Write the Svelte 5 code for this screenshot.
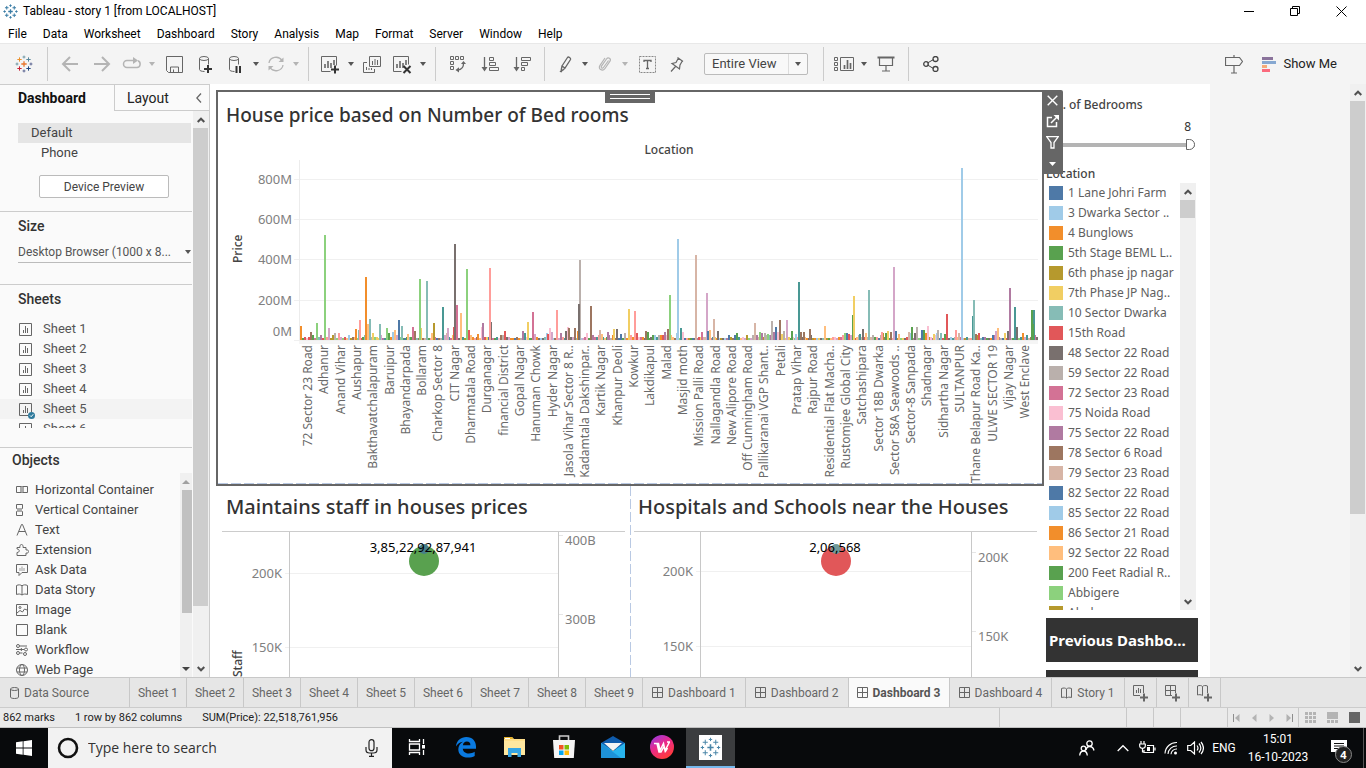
<script>
  const C = {
    blue: '#4e79a7', lblue: '#a0cbe8', orange: '#f28e2b', lorange: '#ffbe7d', green: '#59a14f', lgreen: '#8cd17d',
    olive: '#b6992d', yellow: '#f1ce63', teal: '#499894', lteal: '#86bcb6', red: '#e15759', salmon: '#ff9d9a',
    dgrey: '#79706e', taupe: '#bab0ac', magenta: '#d37295', pink: '#fabfd2', purple: '#b07aa1', lpurple: '#d4a6c8',
    brown: '#9d7660', tan: '#d7b5a6'
  };
  const palette = Object.values(C);

  const menus = ['File', 'Data', 'Worksheet', 'Dashboard', 'Story', 'Analysis', 'Map', 'Format', 'Server', 'Window', 'Help'];

  const tools = [
    { i: 'back', n: 'Undo', w: 'wide' }, { i: 'forward', n: 'Redo', w: 'wide' }, { i: 'replay', n: 'Replay', w: 'narrow', caret: 'dim' },
    { i: 'save', n: 'Save', w: 'wide' }, { i: 'dbAdd', n: 'New data source' }, { i: 'dbPause', n: 'Pause updates', caret: 'on' },
    { i: 'refresh', n: 'Run update', w: 'narrow', caret: 'dim' }, { sep: true },
    { i: 'sheetAdd', n: 'New worksheet', caret: 'on' }, { i: 'duplicate', n: 'Duplicate' }, { i: 'sheetClear', n: 'Clear sheet', caret: 'on' }, { sep: true },
    { i: 'swap', n: 'Swap rows and columns', w: 'wide' }, { i: 'sortAsc', n: 'Sort ascending', w: 'wide' }, { i: 'sortDesc', n: 'Sort descending', w: 'wide' }, { sep: true },
    { i: 'pen', n: 'Highlight', w: 'narrow', caret: 'on' }, { i: 'clip', n: 'Group members', w: 'narrow', caret: 'dim' },
    { i: 'label', n: 'Show mark labels', w: 'wide' }, { i: 'pin', n: 'Fix axes', w: 'narrow' }, { fit: true }, { sep: true },
    { i: 'cards', n: 'Show cards', w: 'narrow', caret: 'on' }, { i: 'present', n: 'Presentation mode', w: 'wide' }, { sep: true },
    { i: 'share', n: 'Share', w: 'wide' }
  ];

  const sheets = ['Sheet 1', 'Sheet 2', 'Sheet 3', 'Sheet 4', 'Sheet 5', 'Sheet 6'];
  const objects = [
    ['hcont', 'Horizontal Container'], ['vcont', 'Vertical Container'], ['text', 'Text'], ['ext', 'Extension'], ['ask', 'Ask Data'],
    ['book', 'Data Story'], ['image', 'Image'], ['blank', 'Blank'], ['flow', 'Workflow'], ['web', 'Web Page']
  ];

  const legend = [
    ['1 Lane Johri Farm', C.blue], ['3 Dwarka Sector ..', C.lblue], ['4 Bunglows', C.orange], ['5th Stage BEML L..', C.green],
    ['6th phase jp nagar', C.olive], ['7th Phase JP Nag..', C.yellow], ['10 Sector Dwarka', C.lteal], ['15th Road', C.red],
    ['48 Sector 22 Road', C.dgrey], ['59 Sector 22 Road', C.taupe], ['72 Sector 23 Road', C.magenta], ['75 Noida Road', C.pink],
    ['75 Sector 22 Road', C.purple], ['78 Sector 6 Road', C.brown], ['79 Sector 23 Road', C.tan], ['82 Sector 22 Road', C.blue],
    ['85 Sector 22 Road', C.lblue], ['86 Sector 21 Road', C.orange], ['92 Sector 22 Road', C.lorange], ['200 Feet Radial R..', C.green],
    ['Abbigere', C.lgreen], ['Abulpur', C.olive]
  ];

  const places = ['72 Sector 23 Road', 'Adhanur', 'Anand Vihar', 'Aushapur', 'Bakthavatchalapuram', 'Baruipur', 'Bhayandarpada', 'Bollaram',
    'Charkop Sector 8', 'CIT Nagar', 'Dharmatala Road', 'Durganagar', 'financial District', 'Gopal Nagar', 'Hanuman Chowk', 'Hyder Nagar',
    'Jasola Vihar Sector 8 R..', 'Kadamtala Dakshinpar..', 'Kartik Nagar', 'Khanpur Deoli', 'Kowkur', 'Lakdikapul', 'Malad', 'Masjid moth',
    'Mission Palli Road', 'Nallagandla Road', 'New Alipore Road', 'Off Cunningham Road', 'Pallikaranai VGP Shant..', 'Petali', 'Pratap Vihar',
    'Rajpur Road', 'Residential Flat Macha..', 'Rustomjee Global City', 'Satchashipara', 'Sector 18B Dwarka', 'Sector 58A Seawoods ..',
    'Sector-8 Sanpada', 'Shadnagar', 'Sidhartha Nagar', 'SULTANPUR', 'Thane Belapur Road Ka..', 'ULWE SECTOR 19', 'Vijay Nagar', 'West Enclave'];

  // Tall marks: x centre, top, colour
  const peaks = [
    [301, 326, 'orange'], [311, 332, 'brown'], [317, 323, 'lgreen'], [325, 235, 'lgreen'], [329, 328, 'lpurple'], [335, 333, 'taupe'],
    [356, 329, 'orange'], [359, 330, 'lteal'], [360, 320, 'salmon'], [368, 324, 'lorange'], [366, 277, 'orange'], [370, 319, 'lteal'],
    [380, 324, 'lteal'], [387, 328, 'lgreen'], [395, 330, 'lorange'], [393, 332, 'lblue'], [399, 320, 'blue'], [402, 326, 'lteal'], [408, 334, 'lorange'],
    [413, 327, 'magenta'], [415, 331, 'brown'], [421, 328, 'yellow'], [420, 279, 'lgreen'], [427, 281, 'lteal'], [432, 333, 'lorange'], [434, 323, 'olive'],
    [443, 307, 'teal'], [448, 328, 'lpurple'], [454, 327, 'red'], [457, 305, 'magenta'], [455, 244, 'dgrey'], [461, 313, 'lorange'],
    [467, 269, 'lgreen'], [469, 330, 'red'], [478, 334, 'orange'], [482, 327, 'pink'], [483, 323, 'purple'], [491, 322, 'dgrey'], [490, 268, 'salmon'],
    [505, 331, 'red'], [523, 331, 'purple'], [528, 322, 'yellow'], [535, 334, 'lpurple'], [533, 312, 'magenta'], [548, 334, 'red'], [550, 328, 'pink'],
    [552, 332, 'lpurple'], [557, 310, 'salmon'], [566, 331, 'dgrey'], [568, 327, 'pink'], [569, 328, 'brown'], [575, 328, 'brown'], [578, 331, 'orange'],
    [580, 260, 'taupe'], [579, 304, 'dgrey'], [591, 306, 'brown'], [600, 330, 'tan'], [602, 334, 'lorange'], [608, 332, 'purple'], [614, 329, 'yellow'],
    [617, 329, 'dgrey'], [621, 334, 'blue'], [629, 309, 'yellow'], [635, 311, 'salmon'], [646, 331, 'brown'], [648, 332, 'green'],
    [665, 332, 'purple'], [668, 329, 'brown'], [670, 295, 'lgreen'], [678, 239, 'lblue'], [681, 328, 'teal'], [683, 332, 'pink'], [696, 255, 'tan'],
    [702, 332, 'magenta'], [707, 293, 'lpurple'], [708, 331, 'blue'], [710, 330, 'lorange'], [714, 319, 'tan'], [718, 331, 'dgrey'], [755, 323, 'tan'],
    [760, 332, 'lgreen'], [762, 333, 'purple'], [765, 333, 'taupe'], [768, 334, 'lgreen'], [772, 321, 'taupe'], [774, 332, 'purple'], [776, 327, 'blue'],
    [778, 332, 'pink'], [780, 320, 'brown'], [782, 334, 'yellow'], [784, 331, 'taupe'], [787, 320, 'lpurple'], [792, 331, 'green'], [796, 334, 'lblue'],
    [799, 282, 'teal'], [801, 332, 'brown'], [804, 332, 'brown'], [810, 329, 'brown'], [825, 326, 'lorange'], [849, 334, 'red'], [853, 315, 'green'],
    [854, 296, 'yellow'], [860, 334, 'teal'], [863, 329, 'dgrey'], [866, 333, 'lorange'], [869, 290, 'lteal'], [882, 332, 'salmon'], [886, 333, 'green'],
    [888, 331, 'yellow'], [891, 332, 'brown'], [894, 267, 'lpurple'], [896, 331, 'blue'], [899, 334, 'lorange'], [909, 332, 'tan'], [911, 333, 'lblue'],
    [912, 327, 'green'], [917, 327, 'taupe'], [922, 330, 'blue'], [924, 330, 'green'], [926, 333, 'orange'], [928, 326, 'pink'], [934, 334, 'yellow'],
    [938, 330, 'taupe'], [945, 334, 'green'], [947, 314, 'red'], [956, 330, 'salmon'], [962, 168, 'lblue'], [973, 316, 'teal'], [974, 300, 'lteal'],
    [976, 334, 'brown'], [996, 331, 'lpurple'], [998, 328, 'lorange'], [1005, 333, 'yellow'], [1008, 331, 'dgrey'], [1010, 288, 'purple'],
    [1015, 307, 'teal'], [1017, 327, 'dgrey'], [1023, 333, 'orange'], [1032, 310, 'green'], [1034, 310, 'teal'], [1033, 324, 'green']
  ];

  // Hundreds of low marks along the baseline
  let seed = 7;
  const rnd = () => ((seed = (seed * 16807) % 2147483647) / 2147483647);
  const low = Array.from({ length: 369 }, (_, k) => {
    const r = rnd();
    return { x: 300 + k * 2, h: r > 0.93 ? 7 : r > 0.78 ? 5 : r > 0.5 ? 3 : 2, c: palette[Math.floor(rnd() * 20)] };
  });

  const G = '#666';
  const svg = (w, h, body, extra = '') =>
    `<svg width="${w}" height="${h}" viewBox="0 0 ${w} ${h}" fill="none" stroke="${G}" aria-hidden="true" ${extra} style="display:block;flex:none">${body}</svg>`;
  const plus = (x, y, r, c, w = 1) => `<path d="M${x - r} ${y}h${2 * r}M${x} ${y - r}v${2 * r}" stroke="${c}" stroke-width="${w}"/>`;
  const logo = (s, cs) => {
    const m = s / 2, a = s * 0.36, b = s * 0.25;
    return svg(s, s, plus(m, m, s * 0.15, cs[0], s > 18 ? 1.6 : 1.3) + plus(m, m - a - 0.5, s * 0.08, cs[1]) + plus(m, m + a + 0.5, s * 0.08, cs[2]) +
      plus(m - a - 0.5, m, s * 0.08, cs[3]) + plus(m + a + 0.5, m, s * 0.08, cs[4]) + plus(m - b, m - b, s * 0.12, cs[5]) + plus(m + b, m - b, s * 0.12, cs[6]) +
      plus(m - b, m + b, s * 0.12, cs[7]) + plus(m + b, m + b, s * 0.12, cs[8]));
  };
  const blues = Array(9).fill('#3a7ca5');
  const frame = '<path d="M10.5 16.5h-9v-15h15v9"/>';
  const columns = '<path d="M5 13V9M8 13V6M11 13V8M14 10V5" stroke-width="1.6"/>';
  const cyl = '<path d="M3.500 3.500v11c0 1.200 2 2 5 2M12.500 3.500v6"/><ellipse cx="8" cy="3.500" rx="4.500" ry="2"/>';
  const grid4 = '<path d="M.5.5h10v10H.5zM5.500.5v10M.5 5.500h10"/>';
  const openBook = '<path d="M.5 1.500c2-.8 4-.6 5 .5 1-1.100 3-1.300 5-.5v9c-2-.6-4-.4-5 .6-1-1-3-1.200-5-.6zM5.500 2v9"/>';
  const add = '<path d="M8 13.500h8M12 9.500v8" stroke-width="2"/>';

  const icons = {
    app: logo(15, blues),
    mark: logo(18, ['#e8762c', '#7199a6', '#5b6591', '#7199a6', '#5c6692', '#eb912c', '#59879b', '#c72035', '#1f457e']),
    back: svg(18, 16, '<path d="M17 8H2M9 1 2 8l7 7" stroke="#b4b4b4" stroke-width="2"/>'),
    forward: svg(18, 16, '<path d="M1 8h15M9 1l7 7-7 7" stroke="#b4b4b4" stroke-width="2"/>'),
    replay: svg(20, 14, '<path d="M12 3.500H5a3.500 3.500 0 0 0 0 7h10a3.500 3.500 0 0 0 1-6.700" stroke="#b4b4b4" stroke-width="1.500"/><path d="M11 0v7l5-3.500z" fill="#b4b4b4" stroke="none"/>'),
    save: svg(17, 17, '<path d="M.5.5h16v16H2.500l-2-2zM4.500 16v-5h8v5M7.500 16v-2.500"/>', 'stroke-width="1"'),
    dbAdd: svg(18, 19, cyl + '<path d="M8 14h8M12 10v8" stroke="#333" stroke-width="2"/>'),
    dbPause: svg(18, 19, cyl + '<path d="M10.500 11v7M14 11v7" stroke="#333" stroke-width="2"/>'),
    refresh: svg(18, 16, '<path d="M2 7a7 6.500 0 0 1 13-2.500M16 9a7 6.500 0 0 1-13 2.500" stroke="#b4b4b4" stroke-width="1.300"/><path d="M16.500 1.500V6h-5zM1.500 14.500V10h5z" fill="#b4b4b4" stroke="none"/>'),
    sheetAdd: svg(20, 19, frame + columns + '<path d="M11 14.500h8M15 10.500v8" stroke="#333" stroke-width="2"/>'),
    duplicate: svg(18, 17, '<path d="M6.500.5h11v10h-11zM4 6.500H.5v10h11V13" /><path d="M9.500 9V5M12 9V3M14.500 9V4M3.500 14v-3M6 14v-2M8.500 14v-2"/>'),
    sheetClear: svg(20, 19, '<path d="M9.500 16.500h-8v-15h15v8"/>' + columns + '<path d="m11.500 11 7 7M18.500 11l-7 7" stroke="#333" stroke-width="2"/>'),
    swap: svg(18, 18, '<path d="M1.500 1.500h3v3h-3zM6.500 1.500h3v3h-3zM11.500 1.500h3v3h-3zM1.500 6.500h3v3h-3zM1.500 11.500h3v3h-3z"/><path d="M14.500 8c.2 4-1.800 6.500-6 7" stroke-width="1.300"/><path d="m12 9 2.500-3L17 9zM10 12.300v5.200L6.500 15z" fill="#666" stroke="none"/>'),
    sortAsc: svg(19, 17, '<path d="M3.500 1v12" stroke-width="1.300"/><path d="M.5 11h6l-3 4.500z" fill="#666" stroke="none"/><path d="M8.500 1.500h4v3h-4zM8.500 6.500h6v3h-6zM8.500 11.500h9v3h-9z"/>'),
    sortDesc: svg(19, 17, '<path d="M3.500 1v12" stroke-width="1.300"/><path d="M.5 11h6l-3 4.500z" fill="#666" stroke="none"/><path d="M8.500 1.500h9v3h-9zM8.500 6.500h6v3h-6zM8.500 11.500h3v3h-3z"/>'),
    pen: svg(13, 17, '<path d="M8.500 1.500 3 10l3 2 5.500-8.500c.5-1.500-2-3.300-3-2zM3 10l-.7 3.500 1.500.8L6 12" stroke-width="1.300"/><path d="m2.300 13.500-1.800 2.300 2 .7 1.500-2.200z" fill="#666" stroke="none"/>'),
    clip: svg(14, 16, '<path d="M10.500 4.500 5.500 11.500c-1 1.500-3 .2-2-1.300L8.500 3c1.700-2.400 5-.2 3.500 2.200L7 12.500c-2.500 3.500-7.500.5-5-3.200L7 2" stroke="#b4b4b4" stroke-width="1.200"/>'),
    label: svg(17, 17, '<path d="M.5.5h16v16H.5z" stroke="#888" stroke-dasharray="2 1"/><path d="M5 6V4.500h7V6M8.500 4.500v8M7 12.500h3" stroke-width="1.300"/>'),
    pin: svg(14, 16, '<path d="M7.500 1.500l5.500 4M8.300 2.200 6 6.500 2 7.500l7.500 5.500.5-4L12.300 5M5.500 10.500 1 15.500" stroke-width="1.200"/>'),
    cards: svg(20, 15, '<path d="M.5.5h3v3h-3zM.5 5.500h3v3h-3zM.5 10.500h3v3h-3zM6.500.5h13v13h-13z"/><path d="M10.500 12V8M13.500 12V3M16.500 12V6" stroke-width="1.700"/>'),
    present: svg(18, 16, '<path d="M.5 1.500h17" stroke-width="2"/><path d="M2.500 2v7.500h13V2M9 9.500v5M5 15h8" stroke-width="1.200"/>'),
    share: svg(16, 16, '<path d="m4.500 7 6-3.500M4.500 9l6 3.500" stroke="#444"/><g stroke="#444" stroke-width="1.300"><circle cx="3" cy="8" r="2.300"/><circle cx="12.500" cy="3" r="2.500"/><circle cx="12.500" cy="13" r="2.500"/></g>'),
    guide: svg(18, 19, '<path d="M9 0v2.500M9 10.500v7M6 18h6M.5 2.500h14l3 4-3 4H.5z" stroke-width="1.200"/>'),
    showme: svg(15, 15, '<g stroke="none"><path d="M0 0h11v3H0z" fill="#8a739b"/><path d="M0 4h14v3H0z" fill="#86a8d1"/><path d="M0 8h5v3H0z" fill="#f5ab7a"/><path d="M0 12h8v3H0z" fill="#fb6a7d"/></g>'),
    sheet: svg(13, 13, '<path d="M.5.5h12v12H.5z"/><path d="M4.500 10V7M6.500 10V3M8.500 10V5"/>'),
    sheetUsed: svg(17, 19, '<g transform="translate(0 3)"><path d="M9 12.500H.5V.5h12V9M4.500 10V7M6.500 10V3M8.500 10V5"/><circle cx="12.500" cy="12.500" r="3.500" fill="#2f7a9c" stroke="none"/><path d="m11 12.500 1.200 1.200 2-2.400" stroke="#fff"/></g>'),
    hcont: svg(12, 12, '<path d="M.5 2.500h5v6h-5zM6.500 2.500h5v6h-5z"/><path d="M4 3h4v5H4z" fill="#aaa" stroke="none"/>'),
    vcont: svg(12, 12, '<path d="M.5.5h6v4h-6zM.5 7.500h6v4h-6z"/><path d="M1 4h5v4H1z" fill="#aaa" stroke="none"/>'),
    text: svg(12, 12, '<path d="M1 11.500 5.500.5h1L11 11.500M3 7.500h6"/>'),
    ext: svg(13, 12, '<path d="M1 11.500v-3c3 0 3-3.500 0-3.500V3.500h3c-1-4 4-4 3 0h3V6c3.500-1 3.500 4 0 3v2.500z"/>'),
    ask: svg(12, 12, '<path d="M.5.500h11v8H6l-3 3v-3H.5z"/><path d="M4 7V4M6 7V2.500M8 7V4" stroke="#999"/>'),
    book: svg(12, 12, '<path d="M.5 1.500c2-1 4-.8 5.500.3C7.500.7 9.500.5 11.500 1.500v9c-2-.8-4-.6-5.500.5-1.500-1.100-3.500-1.300-5.500-.5zM6 2v9"/>'),
    image: svg(12, 12, '<path d="M.5.500h11v11H.5zM1 9l3-2.500L6.500 8l2-3 2.500 1"/><circle cx="4" cy="3.500" r="1"/>'),
    blank: svg(12, 12, '<path d="M.5.500h11v11H.5z"/>'),
    flow: svg(12, 12, '<circle cx="2" cy="2" r="1.500"/><circle cx="10" cy="5.500" r="1.500"/><circle cx="2" cy="9" r="1.500"/><circle cx="9" cy="10" r="1.500"/><path d="M3.500 2H11M0 5.500h8M4 9h2.500M5 4l1 1.500-1 1.500"/>'),
    web: svg(12, 12, '<circle cx="6" cy="6" r="5.500"/><ellipse cx="6" cy="6" rx="2.500" ry="5.500"/><path d="M1 4h10M1 8h10"/>'),
    data: svg(9, 12, '<path d="M.5 2v8c0 .8 1.500 1.500 4 1.500s4-.7 4-1.500V2"/><ellipse cx="4.500" cy="2" rx="4" ry="1.500"/>'),
    dash: svg(11, 11, grid4),
    story: svg(11, 12, openBook),
    addSheet: svg(17, 18, '<path d="M8 11.500H1.500v-10h10V9M4.500 9V6M6.500 9V4M8.500 9V5"/>' + add),
    addDash: svg(17, 18, '<path d="M8 11.500H1.500v-10h10V9M6.500 1.500v10M1.500 6.500h10"/>' + add),
    addStory: svg(17, 18, '<path d="M1.500 2c2-.8 4-.6 5 .5 1-1.100 3-1.300 5-.5v7M6.500 2.500v9C5 10.500 3 10.500 1.500 11V2"/>' + add),
    minimize: svg(10, 10, '<path d="M0 5.500h10" stroke="#000"/>'),
    restore: svg(10, 10, '<path d="M.5 2.500h7v7h-7zM2.500 2V.500h7v7H8" stroke="#000"/>'),
    close: svg(11, 11, '<path d="m.5.500 10 10M10.500.500l-10 10" stroke="#000"/>'),
    chev: svg(6, 10, '<path d="M5 .5.800 5 5 9.500" stroke-width="1.300"/>'),
    up: svg(8, 6, '<path d="M.7 5 4 1.700 7.300 5" stroke="#505050" stroke-width="2"/>'),
    down: svg(8, 6, '<path d="M.7 1 4 4.300 7.300 1" stroke="#505050" stroke-width="2"/>'),
    triUp: svg(8, 4, '<path d="m0 4 4-4 4 4z" fill="#a0a0a0" stroke="none"/>'),
    triDown: svg(8, 4, '<path d="m0 0 4 4 4-4z" fill="#444" stroke="none"/>'),
    zoneX: svg(11, 11, '<path d="m.7.700 9.600 9.600M10.300.700.700 10.300" stroke="#fff" stroke-width="1.400"/>'),
    zoneGo: svg(13, 13, '<path d="M6 2.500H1.500v9h9V7M5 8l6-6" stroke="#fff" stroke-width="1.500"/><path d="M7.500 0H13v5.500z" fill="#fff" stroke="none"/>'),
    zoneFilter: svg(13, 13, '<path d="M.7.700h11.600L8 6.500V12H5V6.500z" stroke="#fff" stroke-width="1.300"/>'),
    zoneMore: svg(7, 4, '<path d="m0 0 3.500 4L7 0z" fill="#fff" stroke="none"/>'),
    first: svg(7, 8, '<path d="M.5 0v8" /><path d="M6.500 0v8L2 4z" fill="#999" stroke="none"/>', 'opacity=".7"'),
    prev: svg(7, 8, '<path d="M5.500 0v8L1 4z" fill="#b4b4b4" stroke="none"/>'),
    next: svg(7, 8, '<path d="M1.500 0v8L6 4z" fill="#b4b4b4" stroke="none"/>'),
    last: svg(7, 8, '<path d="M6.500 0v8"/><path d="M.5 0v8L5 4z" fill="#999" stroke="none"/>', 'opacity=".7"'),
    tiles: svg(11, 11, '<path d="M0 1.500h11M0 5.500h11M0 9.500h11" stroke="#b4b4b4" stroke-width="3" stroke-dasharray="3 1"/>'),
    film: svg(11, 11, '<path d="M0 3.500h11" stroke="#b4b4b4" stroke-width="7"/><path d="M0 9.500h11" stroke="#b4b4b4" stroke-width="3" stroke-dasharray="3 1"/>'),
    single: svg(11, 11, '<path d="M0 0h11v11H0z" fill="#666" stroke="none"/>'),
    windows: svg(16, 16, '<path d="M0 2.300 6.700 1.300v6.300H0zM7.500 1.200 16 0v7.600H7.500zM0 8.400h6.700v6.300L0 13.700zM7.500 8.400H16V16l-8.500-1.200z" fill="#fff" stroke="none"/>'),
    cortana: svg(22, 22, '<circle cx="11" cy="11" r="9" stroke="#111" stroke-width="2.600"/>'),
    mic: svg(13, 18, '<rect x="4" y=".7" width="5" height="11" rx="2.500" stroke="#222" stroke-width="1.200"/><path d="M1 8v3c0 2 1.500 3 3.500 3h4c2 0 3.500-1 3.500-3V8M6.500 14v3M4 17.300h5" stroke="#222" stroke-width="1.200"/>'),
    taskview: svg(18, 18, '<path d="M1.500 1v2.500h10V1M1.500 17v-2.500h10V17M1.500 6h10v6h-10zM15.500 1v5M15.500 12v5" stroke="#fff" stroke-width="1.300"/><path d="M14 7h3v3.500h-3z" fill="#fff" stroke="none"/>'),
    edge: svg(22, 22, '<path fill-rule="evenodd" d="M1 10.500C1.500 4.500 6 1 11.300 1 17.500 1 21 5.200 21 10.500v2.300H7.800c.2 3.200 3 4.700 6 4.700 2.300 0 4.200-.6 5.900-1.700v4.300c-1.900 1-4.200 1.500-6.700 1.500C7 21.600 3.300 18.400 3.300 13.300c0-3.500 2-6.100 4.700-7.600C4.800 6 2.600 8 1 10.500zM7.900 9.200h7.500c0-2.300-1.100-3.600-3.500-3.600-2.200 0-3.600 1.400-4 3.600z" fill="#0a7ae0" stroke="none"/>'),
    explorer: svg(22, 22, '<g stroke="none"><path d="M0 1h8l2 2h11v16H0z" fill="#ffdf8a"/><path d="M0 1h8l1.500 2H0z" fill="#e5b22b"/><path d="M1 2h5v1H1z" fill="#fff"/><path d="M0 5h21v14H0z" fill="#ffe79f"/><path d="M4 21v-9h13v9h-3.500v-4h-6v4z" fill="#35a5e5"/></g>'),
    store: svg(22, 26, '<path d="M6.500 7V2h9v5" stroke="#ccc" stroke-width="1.600"/><path d="M0 6h22l-1.200 18H1.200z" fill="#f5f5f5" stroke="none"/><g stroke="none"><path d="M6 11h4.500v4.500H6z" fill="#f35325"/><path d="M11.500 11H16v4.500h-4.500z" fill="#81bc06"/><path d="M6 16.500h4.500V21H6z" fill="#05a6f0"/><path d="M11.500 16.500H16V21h-4.500z" fill="#ffba08"/></g>'),
    mail: svg(24, 22, '<g stroke="none"><path d="M0 7 12 0l12 7v6H0z" fill="#0f5bab"/><path d="M0 7l12 8 12-8v15H0z" fill="#28b4ee"/><path d="M0 7v15h20z" fill="#1e92d8"/><path d="M3 7h18l-9 8z" fill="#f4f4f4"/></g>'),
    wps: svg(24, 24, '<defs><linearGradient id="wps" x1="0" y1="0" x2="0.600" y2="1"><stop offset="0" stop-color="#8a3df0"/><stop offset=".5" stop-color="#e92a8c"/><stop offset="1" stop-color="#ff3b3b"/></linearGradient></defs><circle cx="12" cy="12" r="12" fill="url(#wps)" stroke="none"/><path d="M4 8.500h4.500L10 15.500l3.500-7 1.500 7L19.500 7M7 8.500l2 8.500h2l3-5.500M15 17l2.500-4M17 7h3" stroke="#fff" stroke-width="1.500"/>'),
    tableau: `<span style="display:block;background:#fff;padding:2px 1px">${logo(21, Array(9).fill('#4a86a8'))}</span>`,
    people: svg(16, 16, '<g stroke="#fff" stroke-width="1.300"><circle cx="10.500" cy="3.500" r="2.700"/><circle cx="4.500" cy="8.500" r="2.300"/><path d="M7 10c.5-2.500 2-3.500 3.500-3.500 2.500 0 4 1.500 4.500 4M.7 15.500c.3-3 1.800-4.500 3.800-4.500s3.500 1.500 3.800 4.500"/></g>'),
    tray: svg(12, 8, '<path d="M.7 7 6 1.700 11.300 7" stroke="#fff" stroke-width="1.300"/>'),
    power: svg(17, 14, '<g stroke="#fff" stroke-width="1.200"><path d="M8 4.500h6.500v7H5V9M16 6.500v3M2 0v3M5 0v3M.7 3h5.600v2c0 3-5.600 3-5.600 0zM3.500 7v4H5"/></g><path d="M8 6h3v4H8z" fill="#fff" stroke="none"/>'),
    wifi: svg(14, 14, '<g stroke="#fff" stroke-width="1.100"><path d="M1 12.500A11.500 11.500 0 0 1 13 1.500M4 13A8.500 8.500 0 0 1 13 5M7 13.300A5.500 5.500 0 0 1 13 8"/></g><circle cx="11.500" cy="12" r="1.500" fill="#fff" stroke="none"/>'),
    sound: svg(17, 14, '<path d="M.7 4.500h3L7.500 1v12L3.700 9.500h-3zM10 4.500c1.200 1.500 1.200 3.500 0 5M12 2.500c2.200 2.700 2.200 6.300 0 9M14 1c3 3.700 3 8.300 0 12" stroke="#fff" stroke-width="1.200"/>'),
    note: svg(17, 16, '<path d="M0 0h16v12H8l-3.500 3.500V12H0z" fill="#fff" stroke="none"/><path d="M3 3.500h10M3 6h10M3 8.500h7" stroke="#111"/>')
  };

  const taskApps = [['taskview', 'Task View'], ['edge', 'Microsoft Edge'], ['explorer', 'File Explorer'], ['store', 'Microsoft Store'], ['mail', 'Mail'], ['wps', 'WPS Office'], ['tableau', 'Tableau']];
  const bottomTabs = [
    ...Array.from({ length: 9 }, (_, k) => ({ t: `Sheet ${k + 1}` })),
    ...Array.from({ length: 4 }, (_, k) => ({ t: `Dashboard ${k + 1}`, i: 'dash', on: k === 2 })),
    { t: 'Story 1', i: 'story' }
  ];
</script>

{#snippet pane(x, w, left, right, mark, dot, value)}
  <svg class="chart" viewBox="{x} 532 {w} 145" role="img" aria-label={value}>
    {#each left as [y, t]}
      <path d="M{mark.l - 4} {y + 0.5}H{mark.r}" stroke="#f0f0f0" />
      <text class="tick" x={mark.l - 7} y={y + 5} text-anchor="end">{t}</text>
    {/each}
    {#each right as [y, t]}
      <path d="M{mark.r} {y - 4.5}h4" stroke="#e6e6e6" />
      <text class="tick" x={mark.r + 6} y={y + 5}>{t}</text>
    {/each}
    <path d="M{mark.l + 0.5} 532V677M{mark.r - 0.5} 532V677" stroke="#c8c8c8" />
    <circle cx={mark.c} cy="561" r="15" fill={mark.fill} />
    <circle cx={mark.c} cy="549" r="5" fill={dot} />
    <text class="value" x={mark.c - 1} y="552" text-anchor="middle">{value}</text>
    {#if mark.axis}
      <text class="axis" transform="translate(242 677) rotate(-90)">{mark.axis}</text>
    {/if}
  </svg>
{/snippet}

<div class="app">
  <header class="title">
    <span class="applogo">{@html icons.app}</span>
    <span class="grow">Tableau - story 1 [from LOCALHOST]</span>
    <button aria-label="Minimize">{@html icons.minimize}</button>
    <button aria-label="Restore">{@html icons.restore}</button>
    <button aria-label="Close">{@html icons.close}</button>
  </header>

  <nav class="menus">
    {#each menus as m}<button>{m}</button>{/each}
  </nav>

  <div class="toolbar">
    <button class="home" aria-label="Start page">{@html icons.mark}</button>
    <i class="sep"></i>
    {#each tools as t}
      {#if t.sep}
        <i class="sep"></i>
      {:else if t.fit}
        <div class="fit">
          <select aria-label="Fit"><option>Entire View</option></select>
          <span class="arrow"><i class="caret on"></i></span>
        </div>
      {:else}
        <button class="tool {t.w ?? ''}" aria-label={t.n}>{@html icons[t.i]}</button>
        {#if t.caret}<button class="more" aria-label="{t.n} options"><i class="caret {t.caret}"></i></button>{/if}
      {/if}
    {/each}
    <span class="grow"></span>
    <button class="guide" aria-label="Data Guide">{@html icons.guide}</button>
    <button class="showme">{@html icons.showme}<span>Show Me</span></button>
  </div>

  <main>
    <aside>
      <div class="tabs">
        <button class="active">Dashboard</button>
        <button class="layout">Layout <span>{@html icons.chev}</span></button>
      </div>
      <div class="panes">
        <div class="stack">
          <section class="device">
            <button class="row sel">Default</button>
            <button class="row sub">Phone</button>
            <button class="preview">Device Preview</button>
          </section>
          <section class="size">
            <h2><label for="size">Size</label></h2>
            <div class="pick">
              <select id="size"><option>Desktop Browser (1000 x 8...</option></select>
              <i class="caret on"></i>
            </div>
          </section>
          <section class="sheets">
            <h2>Sheets</h2>
            <ul>
              {#each sheets as s, k}
                <li class:used={k === 4}><span>{@html k === 4 ? icons.sheetUsed : icons.sheet}</span>{s}</li>
              {/each}
            </ul>
          </section>
          <section class="objects">
            <h2>Objects</h2>
            <div class="objrow">
              <ul>
                {#each objects as [i, t]}<li><span>{@html icons[i]}</span>{t}</li>{/each}
              </ul>
              <div class="thin"><span>{@html icons.triUp}</span><i></i><b></b><span>{@html icons.triDown}</span></div>
            </div>
          </section>
        </div>
        <div class="scroll side"><span>{@html icons.up}</span><i></i><b></b><span>{@html icons.down}</span></div>
      </div>
    </aside>

    <div class="canvas">
      <div class="board">
        <div class="views">
          <article class="zone">
            <h1>House price based on Number of Bed rooms</h1>
            <svg class="chart" viewBox="218 132 824 351" role="img" aria-label="Price by location">
              <text class="axis" x="669" y="154" text-anchor="middle">Location</text>
              <text class="axis" transform="translate(242 263) rotate(-90)">Price</text>
              {#each [[179, '800M'], [219, '600M'], [259, '400M'], [300, '200M'], [340, '0M']] as [y, t]}
                <path d="M294 {y + 0.5}H1038" stroke="#f0f0f0" />
                <text class="tick" x="292" y={t === '0M' ? 336 : y + 5} text-anchor="end">{t}</text>
              {/each}
              <path d="M299.500 160V340" stroke="#ececec" />
              <path d="M299 341h739v3H299z" fill="#f5f5f5" />
              {#each low as b}<rect x={b.x} y={340 - b.h} width="2" height={b.h} fill={b.c} />{/each}
              {#each peaks as [x, y, c]}<rect x={x - 1} {y} width="2" height={340 - y} fill={C[c]} />{/each}
              {#each places as p, k}
                <text class="place" text-anchor="end" transform="translate({Math.round(312 + k * 16.3)} 345) rotate(-90)">{p}</text>
              {/each}
            </svg>
            <i class="dash"></i>
            <span class="grip"><i></i><i></i></span>
            <div class="zonebar">
              <button aria-label="Remove">{@html icons.zoneX}</button>
              <button aria-label="Go to sheet">{@html icons.zoneGo}</button>
              <button aria-label="Use as filter">{@html icons.zoneFilter}</button>
              <button aria-label="More options">{@html icons.zoneMore}</button>
            </div>
          </article>
          <div class="pair">
            <article>
              <h1>Maintains staff in houses prices</h1>
              {@render pane(222, 403, [[573, '200K'], [647, '150K']], [[540, '400B'], [619, '300B']], { l: 289, r: 559, c: 424, fill: C.green, axis: 'Staff' }, '#47808a', '3,85,22,92,87,941')}
            </article>
            <article>
              <h1>Hospitals and Schools near the Houses</h1>
              {@render pane(634, 403, [[571, '200K'], [646, '150K']], [[557, '200K'], [636, '150K']], { l: 700, r: 972, c: 836, fill: C.red }, '#6f9a9a', '2,06,568')}
            </article>
          </div>
        </div>

        <div class="filters">
          <label class="name" for="beds">No. of Bedrooms</label>
          <output for="beds">8</output>
          <input id="beds" type="range" min="1" max="8" value="8" />
          <h3>Location</h3>
          <div class="legend">
            <ul>
              {#each legend as [t, c]}<li><i style="background:{c}"></i>{t}</li>{/each}
            </ul>
            <div class="scroll"><span>{@html icons.up}</span><i></i><b></b><span>{@html icons.down}</span></div>
          </div>
          <button class="nav">Previous Dashbo...</button>
          <button class="nav" aria-label="Next"></button>
        </div>
      </div>
      <div class="scroll edge"><span>{@html icons.up}</span><i></i><b></b><span>{@html icons.down}</span></div>
    </div>
  </main>

  <nav class="bottom">
    <button class="source">{@html icons.data}Data Source</button>
    {#each bottomTabs as t}
      <button class:iconed={t.i} class:on={t.on}>{#if t.i}{@html icons[t.i]}{/if}{t.t}</button>
    {/each}
    <button class="new" aria-label="New worksheet">{@html icons.addSheet}</button>
    <button class="new" aria-label="New dashboard">{@html icons.addDash}</button>
    <button class="new" aria-label="New story">{@html icons.addStory}</button>
  </nav>

  <footer class="status">
    <span>862 marks</span><span>1 row by 862 columns</span><span>SUM(Price): 22,518,761,956</span>
    <i class="grow"></i>
    <i class="cell long"></i><i class="cell"></i><i class="cell"></i><i class="cell mid"></i>
    <div class="cell walk">
      {#each [['first', 'First'], ['prev', 'Previous'], ['next', 'Next'], ['last', 'Last']] as [i, n]}<button aria-label={n}>{@html icons[i]}</button>{/each}
    </div>
    <div class="cell modes">
      {#each [['tiles', 'Show sheet sorter'], ['film', 'Show filmstrip'], ['single', 'Show tabs']] as [i, n]}<button aria-label={n}>{@html icons[i]}</button>{/each}
    </div>
  </footer>

  <div class="taskbar">
    <button class="start" aria-label="Start">{@html icons.windows}</button>
    <div class="search">
      {@html icons.cortana}
      <input aria-label="Search" placeholder="Type here to search" />
      {@html icons.mic}
    </div>
    {#each taskApps as [i, n]}
      <button class="task" class:open={i === 'tableau'} aria-label={n}>{@html icons[i]}</button>
    {/each}
    <span class="grow"></span>
    <button class="people" aria-label="People">{@html icons.people}</button>
    <button class="tr" aria-label="Show hidden icons">{@html icons.tray}</button>
    <button class="tr" aria-label="Battery">{@html icons.power}</button>
    <button class="tr" aria-label="Network">{@html icons.wifi}</button>
    <button class="tr" aria-label="Volume">{@html icons.sound}</button>
    <span class="lang">ENG</span>
    <div class="clock"><time>15:01</time><span>16-10-2023</span></div>
    <button class="note" aria-label="Notifications">{@html icons.note}<b>4</b></button>
    <i class="peek"></i>
  </div>
</div>

<style>
  :global(body) { margin: 0; overflow: hidden; }
  .app { height: 100vh; display: flex; flex-direction: column; font: 13px/20px Roboto, "Noto Sans", sans-serif; color: #333; background: #fff; overflow: hidden; }
  button, select, input { font: inherit; color: inherit; border: 0; background: none; padding: 0; margin: 0; border-radius: 0; white-space: nowrap; }
  ul { list-style: none; margin: 0; padding: 0; }
  h1, h2, h3 { margin: 0; font-weight: 500; }
  .grow { flex: 1; }

  .title { height: 22px; flex: none; display: flex; align-items: center; padding-right: 2px; font-size: 12px; line-height: 24px; color: #000; }
  .title button { width: 46px; display: flex; justify-content: center; }
  .applogo { width: 20px; padding-left: 3px; }
  .menus { height: 21px; flex: none; display: flex; gap: 16px; padding-left: 8px; font-size: 12px; line-height: 24px; color: #000; }

  .toolbar { height: 40px; flex: none; display: flex; align-items: center; background: #f4f4f4; border-top: 1px solid #e8e8e8; }
  .toolbar button { display: flex; align-items: center; justify-content: center; }
  .home { width: 47px; }
  .toolbar .home + .sep { margin-left: 0; }
  .sep { width: 1px; height: 34px; margin: 0 6px; background: #ccc; flex: none; }
  .tool { width: 30px; }
  .wide { width: 32px; }
  .narrow { width: 28px; }
  .more { width: 12px; }
  .caret { display: block; border: solid transparent; border-width: 4px 3px 0; border-top-color: #b4b4b4; width: 0; height: 0; }
  .caret.on { border-top-color: #555; }
  .fit { display: flex; width: 102px; height: 20px; margin: 0 9px 0 13px; border: 1px solid #bbb; border-radius: 2px; background: #f8f8f8; }
  .fit select { flex: 1; min-width: 0; padding-left: 7px; appearance: none; color: #444; }
  .arrow { width: 18px; display: flex; align-items: center; justify-content: center; border-left: 1px solid #ddd; pointer-events: none; }
  .guide { width: 40px; }
  .showme { gap: 6px; padding: 0 29px 0 8px; color: #222; font-size: 13px; }

  main { flex: 1; min-height: 0; display: flex; }
  aside { width: 209px; flex: none; display: flex; flex-direction: column; background: #fafafa; border-right: 1px solid #ccc; }
  .tabs { display: flex; height: 26px; flex: none; border-top: 1px solid #ccc; }
  .tabs button { text-align: left; font-size: 14px; color: #222; }
  .tabs .active { width: 114px; padding-left: 18px; font-weight: 700; color: #111; }
  .tabs .layout { flex: 1; display: flex; align-items: center; justify-content: space-between; padding: 0 7px 0 12px; border: solid #ccc; border-width: 0 0 1px 1px; }
  .panes { flex: 1; min-height: 0; display: flex; }
  .stack { flex: 1; min-width: 0; display: flex; flex-direction: column; padding-right: 1px; }
  section { flex: none; }
  h2 { font-size: 14px; font-weight: 500; color: #333; }
  .device { padding: 12px 1px 12px 18px; border-bottom: 1px solid #ccc; height: 76px; display: flex; flex-direction: column; align-items: flex-start; }
  .row { height: 20px; color: #444; text-align: left; }
  .sel { align-self: stretch; padding-left: 13px; background: #e5e5e5; }
  .sub { padding-left: 23px; }
  .preview { width: 130px; height: 23px; margin: 12px 0 0 21px; border: 1px solid #bbb; border-radius: 2px; background: #fff; font-size: 12px; color: #444; }
  .size { padding: 4px 1px 21px 18px; border-bottom: 1px solid #ccc; }
  .pick { display: flex; align-items: center; margin-top: 5px; border-bottom: 1px solid #bbb; }
  .pick select { flex: 1; min-width: 0; height: 21px; appearance: none; font-size: 12px; color: #555; }
  .sheets { padding-top: 4px; border-bottom: 1px solid #ccc; }
  .sheets h2 { padding: 0 0 10px 18px; }
  .sheets ul { height: 109px; margin-bottom: 19px; overflow: hidden; }
  .sheets li { display: flex; align-items: center; height: 20px; padding-left: 19px; color: #555; }
  .sheets li span { width: 24px; }
  .used { background: #f3f3f3; }
  .objects { flex: 1; min-height: 0; display: flex; flex-direction: column; overflow: hidden; }
  .objects h2 { padding: 2px 0 3px 12px; }
  .objrow { flex: 1; min-height: 0; display: flex; }
  .objrow ul { flex: 1; padding-top: 7px; }
  .objrow li { display: flex; align-items: center; height: 20px; padding-left: 16px; color: #444; }
  .objrow li span { width: 19px; }
  .thin { width: 12px; display: flex; flex-direction: column; align-items: center; background: #f0f0f0; }
  .thin span { height: 17px; flex: none; display: flex; align-items: center; }
  .thin i { width: 10px; flex: 123; background: #c1c1c1; align-self: flex-end; }
  .thin b { flex: 47; }

  .scroll { width: 16px; flex: none; display: flex; flex-direction: column; align-items: center; background: #f0f0f0; }
  .scroll span { height: 17px; flex: none; display: flex; align-items: center; }
  .scroll i { width: 15px; background: #cdcdcd; align-self: flex-start; }
  .side i { flex: 478; }
  .side b { flex: 54; }
  .edge i { flex: 413; }
  .edge b { flex: 146; }
  .legend .scroll i { flex: 18; }
  .legend .scroll b { flex: 375; }

  .canvas { flex: 1; min-width: 0; display: flex; justify-content: space-between; background: #f4f4f4; }
  .board { flex: 0 1 1000px; min-width: 0; display: flex; background: #fff; overflow: hidden; }
  .views { flex: 1; min-width: 0; padding: 6px 0 0 6px; }
  .zone { position: relative; border: 2px solid #666; }
  h1 { font: 500 19px/28px "Noto Sans", sans-serif; color: #333; white-space: nowrap; }
  .zone h1 { padding: 9px 0 3px 8px; }
  .chart { display: block; width: 100%; height: auto; }
  .chart text { font-family: "Noto Sans", sans-serif; }
  .chart .tick { font-size: 13px; fill: #808080; }
  .chart .place { font-size: 12px; fill: #6a6a6a; }
  .chart .axis { font-size: 12px; font-weight: 500; fill: #444; }
  .chart .value { font-size: 13px; fill: #000; }
  .dash { display: block; height: 1px; background: repeating-linear-gradient(90deg, #b9c9e3 0 10px, transparent 10px 13px); }
  .grip { position: absolute; top: 0; left: 387px; width: 40px; height: 7px; padding: 2px 5px; display: flex; flex-direction: column; gap: 3px; background: #666; }
  .grip i { height: 1px; background: #fff; }
  .zonebar { position: absolute; top: -2px; left: 100%; width: 21px; height: 84px; display: flex; flex-direction: column; background: #666; border-radius: 0 2px 0 0; }
  .zonebar button { flex: 1; display: flex; align-items: center; justify-content: center; }
  .pair { display: flex; }
  .pair article { flex: 1; min-width: 0; box-sizing: border-box; padding: 0 5px 0 6px; }
  .pair article + article { padding-left: 4px; padding-right: 7px; background: repeating-linear-gradient(#b9c9e3 0 10px, transparent 10px 13px) left / 1px 100% no-repeat; }
  .pair h1 { padding: 7px 0 10px 4px; font-size: 20px; border-bottom: 1px solid #ccc; }

  .filters { width: 152px; flex: none; padding: 11px 12px 0 2px; display: flex; flex-direction: column; font-family: "Noto Sans", sans-serif; }
  .filters > * { flex: none; }
  .name { font-size: 12px; font-weight: 500; color: #444; }
  output { align-self: flex-end; padding-right: 7px; margin-top: 2px; font-size: 12px; }
  input[type='range'] { appearance: none; width: 149px; height: 16px; }
  input[type='range']::-webkit-slider-runnable-track { height: 4px; background: #b4b4b4; }
  input[type='range']::-webkit-slider-thumb { appearance: none; width: 9px; height: 11px; margin-top: -4px; border: 1px solid #666; border-radius: 0 6px 6px 0; background: #fff; }
  h3 { margin-top: 11px; font-size: 12px; line-height: 19px; font-weight: 500; color: #444; }
  .legend { display: flex; height: 427px; margin-right: 2px; overflow: hidden; }
  .legend ul { flex: 1; min-width: 0; }
  .legend li { display: flex; align-items: center; height: 20px; padding-left: 3px; font-size: 12px; line-height: 22px; color: #606060; white-space: nowrap; }
  .legend li i { width: 14px; height: 14px; margin-right: 5px; flex: none; }
  .nav { height: 44px; margin-top: 8px; padding-left: 3px; background: #333; color: #fff; font-weight: 700; font-size: 15px; text-align: left; }

  .bottom { height: 29px; flex: none; display: flex; background: #e6e6e6; border-top: 1px solid #c8c8c8; border-bottom: 1px solid #ccc; font-size: 12px; }
  .bottom button { display: flex; align-items: center; justify-content: center; min-width: 57px; color: #666; border-right: 1px solid #c8c8c8; }
  .bottom .source { width: 130px; justify-content: flex-start; padding-left: 10px; gap: 5px; }
  .bottom .iconed { gap: 5px; padding: 0 9px; }
  .bottom .on { padding: 0 8px; background: #fafafa; font-weight: 700; color: #555; }
  .bottom .new { min-width: 32px; }

  .status { height: 19px; flex: none; display: flex; background: #eaeaea; border-bottom: 1px solid #c0c0c0; font-size: 11px; line-height: 20px; padding-left: 3px; color: #222; }
  .status > span { margin-right: 20px; }
  .cell { width: 26px; border-left: 1px solid #c8c8c8; }
  .long { width: 126px; }
  .mid { width: 46px; }
  .walk, .modes { display: flex; align-items: center; }
  .walk { width: 70px; justify-content: space-around; }
  .modes { width: 67px; justify-content: space-around; }

  .taskbar { height: 40px; flex: none; display: flex; background: #080a0c; color: #fff; font-size: 12px; line-height: 18px; }
  .taskbar button { display: flex; align-items: center; justify-content: center; }
  .start { width: 48px; }
  .search { width: 344px; display: flex; align-items: center; background: #f2f2f2; padding: 0 14px 0 9px; gap: 9px; box-sizing: border-box; }
  .search input { flex: 1; min-width: 0; font: 14px/20px "Open Sans", sans-serif; outline: 0; }
  .search input::placeholder { color: #333; opacity: 1; }
  .task { width: 49px; border-bottom: 2px solid transparent; }
  .open { background: #3b3d3f; border-bottom-color: #76b9ed; }
  .people { width: 48px; }
  .tr { width: 24px; }
  .lang { width: 34px; text-align: center; line-height: 40px; }
  .clock { width: 74px; display: flex; flex-direction: column; align-items: center; padding-top: 2px; }
  .note { width: 48px; position: relative; }
  .note b { position: absolute; left: 20px; top: 18px; width: 15px; height: 15px; border-radius: 50%; border: 1px solid #888; background: #222; font: 700 11px/15px "Open Sans", sans-serif; }
  .peek { width: 2px; border-left: 1px solid #555; }
</style>
